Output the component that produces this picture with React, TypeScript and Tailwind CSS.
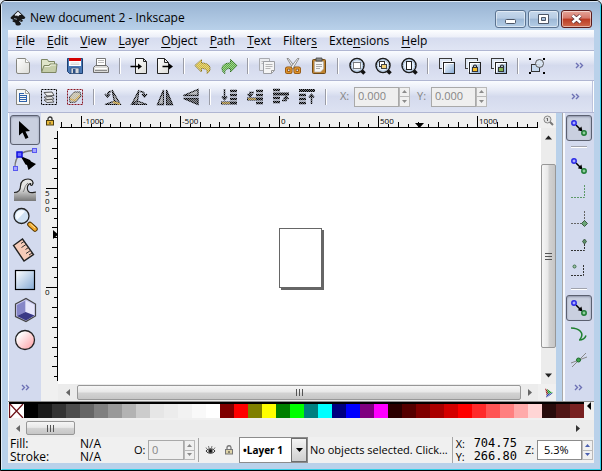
import { type ReactNode } from "react"
import { clsx } from "clsx"

const MENUS: [string, number][] = [
  ["File", 0],
  ["Edit", 0],
  ["View", 0],
  ["Layer", 0],
  ["Object", 0],
  ["Path", 0],
  ["Text", 0],
  ["Filters", 6],
  ["Extensions", 4],
  ["Help", 0],
]

const SWATCHES = [
  "#000000", "#1a1a1a", "#333333", "#4d4d4d", "#666666", "#808080", "#999999",
  "#b3b3b3", "#cccccc", "#e6e6e6", "#ececec", "#f2f2f2", "#f9f9f9", "#ffffff",
  "#800000", "#ff0000", "#808000", "#ffff00", "#008000", "#00ff00", "#008080",
  "#00ffff", "#000080", "#0000ff", "#800080", "#ff00ff", "#2b0000", "#550000",
  "#800000", "#aa0000", "#d40000", "#ff0000", "#ff2a2a", "#ff5555", "#ff8080",
  "#ffaaaa", "#ffd5d5", "#280b0b", "#501616", "#782121",
]

type Item = { label: string; icon: ReactNode; active?: boolean } | "sep"

/* Gradients and the stipple mask shared by all icons */
function IconDefs() {
  return (
    <svg className="absolute h-0 w-0" aria-hidden="true">
      <defs>
        <pattern id="checker" width="2" height="2" patternUnits="userSpaceOnUse">
          <rect width="2" height="2" fill="#777" />
          <rect width="1" height="1" fill="#fff" />
          <rect x="1" y="1" width="1" height="1" fill="#fff" />
        </pattern>
        <mask id="stipple" maskUnits="userSpaceOnUse" x="0" y="0" width="30" height="30">
          <rect width="30" height="30" fill="url(#checker)" />
        </mask>
        <linearGradient id="paper" x1="0" y1="0" x2="1" y2="1">
          <stop offset="0" stopColor="#fff" />
          <stop offset="1" stopColor="#dcdcd8" />
        </linearGradient>
        <linearGradient id="blue" x1="0" y1="0" x2="1" y2="1">
          <stop offset="0" stopColor="#fff" />
          <stop offset="1" stopColor="#84a9d4" />
        </linearGradient>
        <linearGradient id="pink" x1="0" y1="0" x2="1" y2="1">
          <stop offset="0.2" stopColor="#fff" />
          <stop offset="1" stopColor="#ff9a9f" />
        </linearGradient>
        <linearGradient id="water" x1="0" y1="0" x2="0" y2="1">
          <stop offset="0.4" stopColor="#e4e4e4" />
          <stop offset="1" stopColor="#777" />
        </linearGradient>
      </defs>
    </svg>
  )
}

function Icon({ children, faded }: { children: ReactNode; faded?: boolean }) {
  return (
    <svg width="20" height="20" viewBox="0 0 20 20" fill="none" className="shrink-0" aria-hidden="true">
      {faded ? <g mask="url(#stipple)">{children}</g> : children}
    </svg>
  )
}

function ToolIcon({ children }: { children: ReactNode }) {
  return (
    <svg width="26" height="26" viewBox="0 0 26 26" fill="none" className="shrink-0" aria-hidden="true">
      {children}
    </svg>
  )
}

function Lens({ children }: { children: ReactNode }) {
  return (
    <Icon>
      <path d="M14.5 14.5l3 3" stroke="#111" strokeWidth="3.5" />
      <circle cx="10" cy="9.5" r="7" fill="#e3eefa" stroke="#1c1c1c" strokeWidth="1.5" />
      <circle cx="10" cy="9.5" r="5.7" stroke="#a6bdd8" />
      {children}
    </Icon>
  )
}

function Layers({ children }: { children?: ReactNode }) {
  return (
    <Icon>
      <rect x="2.5" y="2.5" width="12" height="10" fill="#dfe8f4" stroke="#3a3a3a" />
      <rect x="5" y="5" width="11" height="11" fill="#f4f8fc" />
      <rect x="6.5" y="6.5" width="11" height="11" fill="url(#blue)" stroke="#222" />
      <path d="M7.5 16.5v-9h9" stroke="#fff" />
      {children}
    </Icon>
  )
}

function SnapNodes() {
  return (
    <Icon>
      <path d="M7 7l5 5" stroke="#000" strokeWidth="1.5" />
      <path d="M13.5 13.5L8.8 12.2l3.6-3.6z" fill="#000" />
      <circle cx="5" cy="5" r="2.2" fill="#a9a9ff" stroke="#2a2ae6" strokeWidth="1.5" />
      <circle cx="15" cy="15" r="2.2" fill="#8fcf9c" stroke="#1f7d35" strokeWidth="1.5" />
    </Icon>
  )
}

function Chevrons() {
  return (
    <svg width="9" height="7" viewBox="0 0 9 7" fill="none" stroke="#6d71b4" strokeWidth="1.4" aria-hidden="true">
      <path d="M1 1l2.5 2.5L1 6M5 1l2.5 2.5L5 6" />
    </svg>
  )
}

function Padlock({ open }: { open?: boolean }) {
  return (
    <svg width="10" height="10" viewBox="0 0 10 10" fill="none" aria-hidden="true">
      <path d={open ? "M3 4.5V3a2 2 0 0 1 4-.5V5" : "M3 5V3a2 2 0 0 1 4 0v2"} stroke={open ? "#777" : "#333"} strokeWidth="1.3" />
      <rect x="1.5" y="4.5" width="7" height="4.5" fill={open ? "#ddd3a8" : "#e8b93a"} stroke={open ? "#777" : "#4a3c10"} />
      <path d="M5 6v2" stroke="#333" />
    </svg>
  )
}

const COMMANDS: Item[] = [
  {
    label: "New",
    icon: (
      <Icon>
        <path d="M4.5 2.5h8l4 4V16a1.5 1.5 0 0 1-1.5 1.5H5A1.5 1.5 0 0 1 3.5 16V3.5a1 1 0 0 1 1-1z" fill="url(#paper)" stroke="#85857f" />
        <path d="M12.5 2.5v4h4" fill="#fff" stroke="#a5a59f" />
      </Icon>
    ),
  },
  {
    label: "Open",
    icon: (
      <Icon>
        <path d="M2.5 15.5v-12h6l1 2h6v5" fill="#dfe5c9" stroke="#7d8663" />
        <path d="M2.5 16.5L5 9.5h5L11 8h7l-1 8.5z" fill="#c5cda9" stroke="#7d8663" />
        <path d="M5.8 10.5h5l1-1.5h5" stroke="#eef1e0" />
      </Icon>
    ),
  },
  {
    label: "Save",
    icon: (
      <Icon>
        <path d="M2.5 2.5h15v15h-13l-2-2z" fill="#4a78b5" stroke="#1d3f70" />
        <path d="M4 2h12v8H4z" fill="#fff" />
        <path d="M4 2h12v3H4z" fill="#d40000" />
        <path d="M5.5 7h9M5.5 8.5h9" stroke="#ccc" strokeWidth="0.8" />
        <path d="M6 12h8v5.5H6z" fill="#d6d9dd" stroke="#33527d" strokeWidth="0.8" />
        <path d="M8 13h2.5v4H8z" fill="#2d4f83" />
      </Icon>
    ),
  },
  {
    label: "Print",
    icon: (
      <Icon>
        <path d="M5.5 9.5v-7h9v7" fill="#fff" stroke="#777" />
        <path d="M7 4.5h6M7 6.5h6" stroke="#bbb" />
        <path d="M2.5 16.5v-5l2-2h11l2 2v5z" fill="#dcdcda" stroke="#6c6c6c" />
        <path d="M4 12.5h12" stroke="#fff" />
        <path d="M4 14.5h12" stroke="#8c8c8c" />
      </Icon>
    ),
  },
  "sep",
  {
    label: "Import",
    icon: (
      <Icon>
        <path d="M6.5 2.5h8l3 3v12h-11z" fill="url(#paper)" stroke="#222" />
        <path d="M14.5 2.5v3h3" stroke="#222" />
        <path d="M1.5 10.5h9" stroke="#000" strokeWidth="1.5" />
        <path d="M9 7.5l4 3-4 3z" fill="#000" />
      </Icon>
    ),
  },
  {
    label: "Export",
    icon: (
      <Icon>
        <path d="M2.5 2.5h7l4 4v11h-11z" fill="url(#paper)" stroke="#222" />
        <path d="M9.5 2.5v4h4" stroke="#222" />
        <path d="M7.5 10.5h8" stroke="#000" strokeWidth="1.5" />
        <path d="M14 7.5l4 3-4 3z" fill="#000" />
      </Icon>
    ),
  },
  "sep",
  {
    label: "Undo",
    icon: (
      <Icon faded>
        <path d="M2 9.5L8.5 3.5V7c5 0 8.5 2 8.5 5.5 0 2-1 4-3 5 .8-3-.5-5-5.5-5V16z" fill="#dcbf2e" stroke="#8c7410" />
      </Icon>
    ),
  },
  {
    label: "Redo",
    icon: (
      <Icon faded>
        <path d="M18 9.5L11.5 3.5V7C6.5 7 3 9 3 12.5c0 2 1 4 3 5-.8-3 .5-5 5.5-5V16z" fill="#5fb53a" stroke="#2c7018" />
      </Icon>
    ),
  },
  "sep",
  {
    label: "Copy",
    icon: (
      <Icon>
        <path d="M2.5 2.5h10v12h-10z" fill="#ebecef" stroke="#a9abb0" />
        <path d="M4.5 5.5h5M4.5 7.5h3" stroke="#bbb" />
        <path d="M6.5 5.5h11v9l-3 3h-8z" fill="#f5f5f5" stroke="#9c9ea3" />
        <path d="M8.5 8.5h7M8.5 10.5h7M8.5 12.5h5" stroke="#b5b5b5" />
        <path d="M14.5 17.5v-3h3" stroke="#999" />
      </Icon>
    ),
  },
  {
    label: "Cut",
    icon: (
      <Icon>
        <path d="M4 2.5h1.5l7 9-2 1.5z" fill="#e8e8e6" stroke="#777" strokeWidth="0.8" />
        <path d="M16 2.5h-1.5l-7 9 2 1.5z" fill="#f5f5f3" stroke="#777" strokeWidth="0.8" />
        <rect x="3.5" y="12" width="4.5" height="4.5" rx="1" stroke="#8c500c" strokeWidth="3" />
        <rect x="12" y="12" width="4.5" height="4.5" rx="1" stroke="#8c500c" strokeWidth="3" />
        <rect x="3.5" y="12" width="4.5" height="4.5" rx="1" stroke="#e0952e" strokeWidth="1.5" />
        <rect x="12" y="12" width="4.5" height="4.5" rx="1" stroke="#e0952e" strokeWidth="1.5" />
      </Icon>
    ),
  },
  {
    label: "Paste",
    icon: (
      <Icon>
        <rect x="3.5" y="3.5" width="13" height="14" rx="1" fill="#c08430" stroke="#6f4a16" />
        <path d="M5.5 5.5h9V13l-3 3h-6z" fill="#f6f6f4" stroke="#aaa" strokeWidth="0.6" />
        <path d="M7 8.5h6M7 10.5h6M7 12.5h4" stroke="#aaa" />
        <path d="M7 2h6v3H7z" fill="#8a8a86" stroke="#444" strokeWidth="0.8" />
      </Icon>
    ),
  },
  "sep",
  {
    label: "Zoom selection",
    icon: (
      <Lens>
        <rect x="6.5" y="6.5" width="7" height="6" stroke="#000" strokeDasharray="1 1" fill="#fff" />
      </Lens>
    ),
  },
  {
    label: "Zoom drawing",
    icon: (
      <Lens>
        <rect x="6.5" y="5.5" width="5" height="5" fill="#fff" stroke="#333" />
        <rect x="8.5" y="8.5" width="5" height="4" fill="#f3d377" stroke="#444" />
      </Lens>
    ),
  },
  {
    label: "Zoom page",
    icon: (
      <Lens>
        <rect x="7.5" y="5.5" width="5" height="8" fill="#fff" stroke="#222" />
      </Lens>
    ),
  },
  "sep",
  { label: "Duplicate", icon: <Layers /> },
  {
    label: "Clone",
    icon: (
      <Layers>
        <path d="M10.5 12v-1.5a1.5 1.5 0 0 1 3 0V12" stroke="#222" strokeWidth="1.2" />
        <rect x="9.5" y="11.5" width="5" height="4" fill="#f5bd2a" stroke="#333" />
      </Layers>
    ),
  },
  {
    label: "Unlink clone",
    icon: (
      <Layers>
        <path d="M11.5 11v-.5a1.5 1.5 0 0 1 3 0V12" stroke="#222" strokeWidth="1.2" />
        <rect x="9.5" y="11.5" width="5" height="4" fill="#86b552" stroke="#333" />
      </Layers>
    ),
  },
  "sep",
  {
    label: "Group",
    icon: (
      <Icon>
        <rect x="4.5" y="8.5" width="8" height="7" fill="#c6d9ee" stroke="#333" />
        <circle cx="12.5" cy="7.5" r="4" fill="#d8e4f2" fillOpacity="0.9" stroke="#555" />
        <path d="M2 2h2v2H2zM16 2h2v2h-2zM2 16h2v2H2zM16 16h2v2h-2z" fill="#000" />
      </Icon>
    ),
  },
]

const SELECT_OPTIONS: Item[] = [
  {
    label: "Select all",
    icon: (
      <Icon>
        <path d="M3.5 2.5h9l4 4v11h-13z" fill="#f7f7f5" stroke="#85857f" />
        <path d="M12.5 2.5v4h4" stroke="#a5a59f" />
        <path d="M6 6.5h5M6 8.5h8M6 10.5h8M6 12.5h8M6 14.5h8M6.5 6v9M13.5 8v7" stroke="#2f62ab" />
      </Icon>
    ),
  },
  {
    label: "Select all in all layers",
    icon: (
      <Icon>
        <rect x="2.5" y="2.5" width="15" height="15" stroke="#000" strokeDasharray="2 1" />
        <path d="M5 13l3 2.5 7-.5-2-2.5z" fill="#eee" stroke="#555" />
        <path d="M5 10l3 2.5 7-.5-2-2.5z" fill="#eee" stroke="#555" />
        <path d="M5 5.5L8 9l7-.5L13 5z" fill="#eee" stroke="#555" />
      </Icon>
    ),
  },
  {
    label: "Deselect",
    icon: (
      <Icon>
        <rect x="2.5" y="2.5" width="15" height="15" stroke="#8b1420" strokeDasharray="2 1" />
        <g mask="url(#stipple)">
          <path d="M4.5 10L9 5h6l1 4-5 6-6 .5z" fill="#c9c0a0" stroke="#333" />
          <path d="M5 12l5 1.5 5-5" stroke="#d3a53c" strokeWidth="1.5" />
        </g>
      </Icon>
    ),
  },
  "sep",
  {
    label: "Rotate 90° CCW",
    icon: (
      <Icon faded>
        <path d="M9 3l3 14h5zM2 17.5h15L12 14z" fill="#aaa" stroke="#000" strokeWidth="1.2" />
        <path d="M10 15l7 2" stroke="#c99d31" strokeWidth="2" />
        <path d="M8 4.5C5 4.5 4.5 6 4.5 9M2 7l2.5 3L7 7" stroke="#000" strokeWidth="1.4" />
      </Icon>
    ),
  },
  {
    label: "Rotate 90° CW",
    icon: (
      <Icon faded>
        <path d="M10 3L8 17H3zM3 17.5h15L8 14z" fill="#aaa" stroke="#000" strokeWidth="1.2" />
        <path d="M11 4.5c4 0 4.5 1.5 4.5 4.5M13 7l2.5 3L18 7" stroke="#000" strokeWidth="1.4" />
      </Icon>
    ),
  },
  {
    label: "Flip horizontal",
    icon: (
      <Icon faded>
        <path d="M8.5 3v14.5h-6z" fill="#aaa" stroke="#000" strokeWidth="1.3" />
        <path d="M11.5 3v14.5h6z" fill="#444" stroke="#000" strokeWidth="1.3" />
      </Icon>
    ),
  },
  {
    label: "Flip vertical",
    icon: (
      <Icon faded>
        <path d="M2.5 8.5H17v-6z" fill="#aaa" stroke="#000" strokeWidth="1.3" />
        <path d="M2.5 11.5H17v6z" fill="#444" stroke="#000" strokeWidth="1.3" />
      </Icon>
    ),
  },
  "sep",
  {
    label: "Lower to bottom",
    icon: (
      <Icon faded>
        <path d="M11 4h7M11 8h7M11 12h7" stroke="#000" strokeWidth="2.5" />
        <path d="M2 16h16" stroke="#000" strokeWidth="3" />
        <path d="M3 16h8" stroke="#c99d31" strokeWidth="1.5" />
        <path d="M5.5 2v10M3 9.5l2.5 3 2.5-3" stroke="#000" strokeWidth="1.5" />
      </Icon>
    ),
  },
  {
    label: "Lower",
    icon: (
      <Icon faded>
        <path d="M11 4h7M11 8h7M11 16h7" stroke="#000" strokeWidth="2.5" />
        <path d="M2 12h16" stroke="#000" strokeWidth="3" />
        <path d="M3 12h8" stroke="#c99d31" strokeWidth="1.5" />
        <path d="M9 5.5H5V9M2.5 7L5 9.5 7.5 7" stroke="#000" strokeWidth="1.5" />
      </Icon>
    ),
  },
  {
    label: "Raise",
    icon: (
      <Icon faded>
        <path d="M2 3h7M2 11h7M2 15h7" stroke="#000" strokeWidth="2.5" />
        <path d="M2 7h16" stroke="#000" strokeWidth="3" />
        <path d="M11 13.5h4V10M12.5 12L15 9.5l2.5 2.5" stroke="#000" strokeWidth="1.5" />
      </Icon>
    ),
  },
  {
    label: "Raise to top",
    icon: (
      <Icon faded>
        <path d="M2 3.5h16" stroke="#000" strokeWidth="3" />
        <path d="M2 8h7M2 12h7M2 16h7" stroke="#000" strokeWidth="2.5" />
        <path d="M14.5 17V8M12 10.5l2.5-3 2.5 3" stroke="#000" strokeWidth="1.5" />
      </Icon>
    ),
  },
  "sep",
]

const TOOLS: { label: string; icon: ReactNode; active?: boolean }[] = [
  {
    label: "Select",
    active: true,
    icon: (
      <ToolIcon>
        <path d="M7 4v14.5l3.5-3 3 6.5 3-1.5-3-6 4.500-.5z" fill="#000" />
      </ToolIcon>
    ),
  },
  {
    label: "Edit paths by nodes",
    icon: (
      <ToolIcon>
        <path d="M3 20C3 9 9 4 21 3.5" stroke="#777" strokeWidth="1.3" />
        <rect x="1.5" y="19.5" width="4" height="4" fill="#a5a5ff" stroke="#5858f0" />
        <rect x="20.5" y="1.5" width="4" height="4" fill="#a5a5ff" stroke="#5858f0" />
        <path d="M8.5 9l5 8.5 1.5.5 1.5 5 7.500-6-5-2.5-1-1.5z" fill="#000" />
        <rect x="5" y="5" width="5" height="5" fill="#6a6aff" stroke="#1010e0" strokeWidth="1.5" />
      </ToolIcon>
    ),
  },
  {
    label: "Tweak",
    icon: (
      <ToolIcon>
        <path d="M2 15.5c5 0 6.5-3 6.5-6.5C8.5 4.5 12 2 16 2c4 0 6 3 4.5 5.5-.8 1.5-2.5.8-2-.8-4 0-5 9 1.5 9 1.5 0 2.5-.7 4-.7v9H2z" fill="url(#water)" />
        <path d="M2 15.5c5 0 6.5-3 6.5-6.5C8.5 4.5 12 2 16 2c4 0 6 3 4.5 5.5-.8 1.5-2.5.8-2-.8-4 0-5 9 1.5 9 1.5 0 2.5-.7 4-.7" stroke="#222" strokeWidth="1.2" />
        <path d="M11 15c2-2 1-6 5-9" stroke="#777" />
      </ToolIcon>
    ),
  },
  {
    label: "Zoom",
    icon: (
      <ToolIcon>
        <path d="M16 16l2 2" stroke="#333" strokeWidth="3" />
        <path d="M18 17.5l5 4.5" stroke="#5a3b05" strokeWidth="5.5" strokeLinecap="round" />
        <path d="M18 17.5l5 4.5" stroke="#f4ac2d" strokeWidth="3.5" strokeLinecap="round" />
        <path d="M18.5 17l4.5 4" stroke="#ffe4a1" />
        <circle cx="9.5" cy="9" r="7.5" fill="#cfe1f3" stroke="#222" strokeWidth="1.3" />
        <path d="M4 9a5.5 5.5 0 0 1 9-4.5L5 13A6 6 0 0 1 4 9z" fill="#f5faff" />
      </ToolIcon>
    ),
  },
  {
    label: "Measure",
    icon: (
      <ToolIcon>
        <path d="M1.5 8.5L10.5 2l11 15.5L12 24z" fill="#f6cbb8" stroke="#222" strokeWidth="1.4" />
        <path d="M12 4.5l-3 2M14 7.5l-4.5 3M16.5 10.5l-3 2M18.5 13.5l-4.5 3M20 16l-3 2" stroke="#333" />
      </ToolIcon>
    ),
  },
  {
    label: "Rectangle",
    icon: (
      <ToolIcon>
        <rect x="3.5" y="3.5" width="19" height="19" fill="url(#blue)" stroke="#000" strokeWidth="1.2" />
      </ToolIcon>
    ),
  },
  {
    label: "3D box",
    icon: (
      <ToolIcon>
        <path d="M3.5 7L14 1.5 23.5 7v12L14 24.5 3.5 19.5z" fill="#c6c6ee" />
        <path d="M5 8l8.5-4.5V15L5 19z" fill="#8686c8" />
        <path d="M13.5 3.5L22.5 8v10.5L13.5 15z" fill="#e6e6fb" />
        <path d="M5 19l8.5-4 9 3.5-8.5 5z" fill="#393985" />
        <path d="M3.5 7L14 1.5 23.5 7v12L14 24.5 3.5 19.5z" stroke="#444" strokeWidth="1.2" />
      </ToolIcon>
    ),
  },
  {
    label: "Ellipse",
    icon: (
      <ToolIcon>
        <circle cx="13" cy="13" r="9.5" fill="url(#pink)" stroke="#222" strokeWidth="1.3" />
      </ToolIcon>
    ),
  },
]

const SNAPS: Item[] = [
  { label: "Enable snapping", icon: <SnapNodes />, active: true },
  "sep",
  { label: "Snap bounding boxes", icon: <SnapNodes /> },
  {
    label: "Snap to edges",
    icon: (
      <Icon>
        <path d="M2 15.5h13.5V2" stroke="#5d9a68" strokeDasharray="2 1" />
      </Icon>
    ),
  },
  {
    label: "Snap to corners",
    icon: (
      <Icon>
        <path d="M2 15.5h13.5V2" stroke="#666" strokeDasharray="2 1" />
        <path d="M15.5 12.5l3 3-3 3-3-3z" fill="#6aa577" stroke="#3d5c45" />
      </Icon>
    ),
  },
  {
    label: "Snap to edge midpoints",
    icon: (
      <Icon>
        <path d="M2 16.5h13.5V6" stroke="#333" strokeDasharray="2 1" />
        <path d="M15.5 5l2 2.5-2 2.5-2-2.5z" fill="#5d8f69" stroke="#3d5c45" />
      </Icon>
    ),
  },
  {
    label: "Snap to centers",
    icon: (
      <Icon>
        <path d="M2 15.5h12.5V4" stroke="#333" strokeDasharray="2 1" />
        <circle cx="5.5" cy="6.5" r="1.5" fill="#9fc5a8" stroke="#3f6f4b" />
      </Icon>
    ),
  },
  "sep",
  { label: "Snap nodes", icon: <SnapNodes />, active: true },
  {
    label: "Snap to paths",
    icon: (
      <Icon>
        <path d="M2 4c8 0 14 5 9 11.5M10 16c4 0 6-1.5 7-4.5" stroke="#1f8030" strokeWidth="1.5" />
      </Icon>
    ),
  },
  {
    label: "Snap to intersections",
    icon: (
      <Icon>
        <path d="M2 13l16-6M3 17L17 3" stroke="#888" />
        <circle cx="9.5" cy="10" r="2" fill="#3fa54f" stroke="#1d6a2c" />
      </Icon>
    ),
  },
]

function ItemRow({ items }: { items: Item[] }) {
  return (
    <>
      {items.map((item, i) =>
        item === "sep" ? (
          <span key={i} className="flex w-3 shrink-0 justify-center">
            <span className="h-4 w-0.5 border-l border-[#9a9ca6] bg-white" />
          </span>
        ) : (
          <button key={i} aria-label={item.label} className="flex h-[26px] w-[26px] shrink-0 items-center justify-center">
            {item.icon}
          </button>
        )
      )}
    </>
  )
}

function Spinner({ name, color = "#8b8b8b" }: { name: string; color?: string }) {
  return (
    <span className="flex w-[11px] flex-col bg-[#f0f0f0]">
      <button aria-label={`Increase ${name}`} className="flex flex-1 items-center justify-center border border-[#b9b9b9]">
        <svg width="5" height="3" viewBox="0 0 5 3" aria-hidden="true"><path d="M0 3L2.5 0 5 3z" fill={color} /></svg>
      </button>
      <button aria-label={`Decrease ${name}`} className="flex flex-1 items-center justify-center border border-t-0 border-[#b9b9b9]">
        <svg width="5" height="3" viewBox="0 0 5 3" aria-hidden="true"><path d="M0 0l2.5 3L5 0z" fill={color} /></svg>
      </button>
    </span>
  )
}

function CoordField({ id, label }: { id: string; label: string }) {
  return (
    <div className="flex items-center gap-[3px] text-[#858585]">
      <label htmlFor={id} className="w-[11px]">{label}</label>
      <div className="flex h-5">
        <input id={id} defaultValue="0.000" disabled className="w-[45px] border border-[#a9a9a9] bg-[#efefef] px-[3px]" />
        <Spinner name={id} />
      </div>
    </div>
  )
}

function Arrow({ d, color = "#666" }: { d: string; color?: string }) {
  return (
    <svg width="9" height="9" viewBox="0 0 9 9" className="shrink-0" aria-hidden="true">
      <path d={d} fill={color} />
    </svg>
  )
}

function Grip({ vertical }: { vertical?: boolean }) {
  return (
    <svg width="9" height="9" viewBox="0 0 9 9" stroke="#555" aria-hidden="true">
      <path d={vertical ? "M1 1.5h7M1 4.5h7M1 7.5h7" : "M1.5 1v7M4.5 1v7M7.5 1v7"} />
    </svg>
  )
}

function WindowButton({ label, children, close }: { label: string; children: ReactNode; close?: boolean }) {
  return (
    <button
      aria-label={label}
      className={clsx(
        "flex h-[18px] w-[31px] items-center justify-center rounded-[3px] border shadow-[inset_0_0_0_1px_rgba(255,255,255,0.5)]",
        close
          ? "border-[#5b1b1b] bg-[linear-gradient(#e5a599_0%,#d6786a_45%,#bb3a22_50%,#cf6a4d_100%)]"
          : "border-[#5b7391] bg-[linear-gradient(#c6d8ec_0%,#b7cce4_45%,#9db8d6_50%,#b4cde6_100%)]"
      )}
    >
      {children}
    </button>
  )
}

function TitleBar() {
  return (
    <header className="flex h-7 shrink-0 justify-between bg-[linear-gradient(#99b4d3,#b9d1ea)]">
      <div className="flex items-start gap-1 pt-2 pl-2">
        <svg width="16" height="16" viewBox="0 0 16 16" aria-hidden="true">
          <path d="M8 .5l7 6.5c1 1-.5 2-3 2.3-1.5.2 1.5 1 1 1.7-.8 1-3.500.8-3 1.7.3.7 1.5.5 1 1.3-.6 1-1.6 1.5-3 1.5s-2-.5-2.5-1.300c-.5-.7.5-1.2-.5-1.7s-2-.5-2.5-1.2 2-1.3.5-1.6C.8 9 0 8 1 7z" fill="#171717" />
          <path d="M8 1.5L4.5 5 6 6l1-.8 1 1.2 1.5-1.3L11.5 5z" fill="#e8eef5" />
          <path d="M4 8.5l3 .8M9 11.5l2-.5" stroke="#8a97a8" />
        </svg>
        <h1 className="leading-4 text-black">New document 2 - Inkscape</h1>
      </div>
      <div className="flex gap-0.5 pt-2 pr-2">
        <WindowButton label="Minimize">
          <svg width="13" height="12" viewBox="0 0 13 12"><rect x="1.5" y="6.5" width="10" height="4" rx="1" fill="#fff" stroke="#4c5667" /></svg>
        </WindowButton>
        <WindowButton label="Maximize">
          <svg width="13" height="12" viewBox="0 0 13 12">
            <path d="M1.5 1.5h10v9h-10zM4.5 4.5h4v3h-4z" fill="#fff" fillRule="evenodd" stroke="#4c5667" />
          </svg>
        </WindowButton>
        <WindowButton label="Close" close>
          <svg width="13" height="12" viewBox="0 0 13 12" fill="none">
            <path d="M2.5 2.5l8 7M10.5 2.5l-8 7" stroke="#5a3038" strokeWidth="4" />
            <path d="M2.5 2.5l8 7M10.5 2.5l-8 7" stroke="#fff" strokeWidth="2.5" />
          </svg>
        </WindowButton>
      </div>
    </header>
  )
}

const BAR = "flex shrink-0 items-center border-b border-[#b0b6d2] bg-[linear-gradient(#fafcff_0%,#e6eaf6_30%,#d4daed_50%,#dde2f2_100%)]"

/* One tick each 50 units, numbered every 500 */
const TICKS = Array.from({ length: 121 }, (_, i) => i - 60)
const STEP = 9.92
const X_LABELS = [-1000, -500, 0, 500, 1000]
const Y_LABELS = [500, 0]

function RulerX() {
  return (
    <div className="ml-0.5 mr-[3px] overflow-hidden border-b border-black">
      <svg width="100%" height="14" className="block" aria-hidden="true">
        {TICKS.map((k) => {
          const x = Math.round(219 + k * STEP)
          const h = k % 10 === 0 ? 11 : k % 2 === 0 ? 5 : 3
          return <rect key={k} x={x} y={14 - h} width="1" height={h} />
        })}
        {X_LABELS.map((n) => (
          <text key={n} x={Math.round(221 + (n / 50) * STEP)} y="11" fontSize="8">{n}</text>
        ))}
        <path d="M355 10h9l-4.5 5z" />
      </svg>
    </div>
  )
}

function RulerY() {
  return (
    <div className="mt-[3px] mb-[3px] overflow-hidden border-r border-black">
      <svg width="16" height="100%" className="block" aria-hidden="true">
        {TICKS.map((k) => {
          const y = Math.round(156 + k * STEP)
          const w = k % 10 === 0 ? 11 : k % 2 === 0 ? 5 : 3
          return <rect key={k} x={16 - w} y={y} width={w} height="1" />
        })}
        {Y_LABELS.map((n) =>
          String(n).split("").map((digit, i) => (
            <text key={`${n}-${i}`} x="4" y={Math.round(156 - (n / 50) * STEP) + 8 + i * 8} fontSize="8">{digit}</text>
          ))
        )}
        <path d="M12 99v9l5-4.5z" />
      </svg>
    </div>
  )
}

const THUMB_X = "flex items-center justify-center rounded-[2px] border border-[#979797] bg-[linear-gradient(#f6f6f6_0%,#e8e8e8_45%,#d2d2d2_55%,#c6c6c6_100%)]"

function Workspace() {
  return (
    <div className="grid min-w-0 flex-1 grid-cols-[17px_1fr_15px] grid-rows-[15px_1fr_17px] bg-[#f0f0f0]">
      <div className="flex items-center justify-center"><Padlock /></div>
      <RulerX />
      <button aria-label="Zoom drawing if window is resized" className="flex items-center justify-center">
        <svg width="11" height="11" viewBox="0 0 11 11" fill="none" stroke="#888" aria-hidden="true">
          <circle cx="4.5" cy="4.5" r="3.5" fill="#e4e4e4" />
          <path d="M4.5 3v3M3.5 3.5h1" stroke="#666" />
          <path d="M7 7l3 3" stroke="#777" strokeWidth="2" />
        </svg>
      </button>

      <RulerY />
      <main className="relative overflow-hidden bg-white">
        <div className="absolute left-[221px] top-[100px] h-[60px] w-[43px] border border-[#666] bg-white shadow-[2px_2px_0_#666]" />
      </main>
      <div className="flex flex-col items-center bg-[#ececec]">
        <span className="flex h-9 shrink-0 items-center pb-[18px]"><Arrow d="M1 6.5L4.5 2.5 8 6.5z" color="#222" /></span>
        <div className="flex w-full flex-1 items-center justify-center rounded-[2px] border border-[#979797] bg-[linear-gradient(90deg,#f6f6f6_0%,#e8e8e8_45%,#d2d2d2_55%,#c6c6c6_100%)]">
          <Grip vertical />
        </div>
        <span className="flex h-9 shrink-0 items-center pt-[18px]"><Arrow d="M1 2.5h7L4.5 6.5z" color="#222" /></span>
      </div>

      <div />
      <div className="mr-[3px] flex items-center bg-[#ececec] pl-px">
        <span className="flex w-[18px] justify-center"><Arrow d="M6 1v7L2 4.5z" /></span>
        <div className={clsx(THUMB_X, "h-[15px] flex-1")}><Grip /></div>
        <span className="flex w-[17px] justify-center"><Arrow d="M3 1v7l4-3.5z" /></span>
      </div>
      <button aria-label="Color-managed view" className="flex items-center justify-center">
        <svg width="10" height="10" viewBox="0 0 10 10" aria-hidden="true">
          <g mask="url(#stipple)">
            <path d="M1 0l4 3-2 6z" fill="#a02020" />
            <path d="M3 1l6 4-5 1z" fill="#1d9a2c" />
            <path d="M9 5L2 10l1-4z" fill="#2a3fae" />
          </g>
        </svg>
      </button>
    </div>
  )
}

const PRESSED = "border border-[#5b6070] bg-[#c9cfdf] shadow-[inset_0_1px_2px_#8d94a8]"

function Toolbox() {
  return (
    <nav aria-label="Toolbox" className="flex w-[33px] shrink-0 flex-col items-center border-l border-white bg-[#d3daee] pt-0.5">
      {TOOLS.map((tool) => (
        <button
          key={tool.label}
          aria-label={tool.label}
          className={clsx("flex h-[30px] w-[30px] items-center justify-center rounded-[3px]", tool.active && PRESSED)}
        >
          {tool.icon}
        </button>
      ))}
      <button aria-label="More tools" className="mt-auto flex h-7 items-center"><Chevrons /></button>
    </nav>
  )
}

function SnapBar() {
  return (
    <nav aria-label="Snapping" className="ml-[6px] flex w-8 shrink-0 flex-col items-center border-l border-[#a9a9a9] bg-[#d3daee] pt-0.5 shadow-[inset_2px_0_0_#f7f9fd]">
      {SNAPS.map((snap, i) =>
        snap === "sep" ? (
          <span key={i} className="flex h-3 items-center">
            <span className="h-0.5 w-4 border-t border-[#a0a3ae] bg-white" />
          </span>
        ) : (
          <button
            key={i}
            aria-label={snap.label}
            className={clsx("flex h-[26px] w-[26px] items-center justify-center rounded-[3px]", snap.active && PRESSED)}
          >
            {snap.icon}
          </button>
        )
      )}
      <button aria-label="More snap options" className="mt-auto flex h-7 items-center"><Chevrons /></button>
    </nav>
  )
}

function Palette() {
  return (
    <div className="shrink-0 bg-[#f0f0f0]">
      <div className="flex h-[18px] items-start pl-px">
        <div className="flex h-4 flex-1 border-t-2 border-black">
          <button aria-label="None" className="w-[15px] shrink-0 bg-white">
            <svg width="15" height="14" viewBox="0 0 15 14" stroke="#6d1017" strokeWidth="1.3" aria-hidden="true">
              <path d="M.5 0v14M1 0l13 14M14 0L1 14" />
            </svg>
          </button>
          {SWATCHES.map((color, i) => (
            <button key={i} aria-label={color} className="flex-1" style={{ backgroundColor: color }} />
          ))}
        </div>
        <button aria-label="Palette menu" className="flex w-[10px] justify-center"><Arrow d="M6 0v8L2 4z" color="#000" /></button>
      </div>
      <div className="flex h-[17px] items-center bg-[#ececec] pl-0.5 pb-px">
        <span className="flex w-4 justify-center"><Arrow d="M6 1v7L2 4.5z" /></span>
        <div className={clsx(THUMB_X, "h-[14px] w-[49px]")}><Grip /></div>
        <span className="ml-auto mr-3"><Arrow d="M3 1v7l4-3.5z" color="#333" /></span>
      </div>
    </div>
  )
}

function StatusBar() {
  return (
    <footer className="flex h-[26px] shrink-0 items-center bg-[#f0f0f0] text-[11px] text-black">
      <dl className="grid w-[126px] shrink-0 grid-cols-[70px_1fr] pl-0.5 text-[12px] leading-[13px]">
        <dt>Fill:</dt>
        <dd>N/A</dd>
        <dt>Stroke:</dt>
        <dd>N/A</dd>
      </dl>
      <div className="flex shrink-0 items-center">
        <label htmlFor="opacity" className="w-[14px]">O:</label>
        <div className="flex h-5">
          <input id="opacity" defaultValue="0" disabled className="w-9 border border-[#a9a9a9] bg-[#efefef] px-[3px] text-[#858585]" />
          <Spinner name="opacity" />
        </div>
      </div>
      <span className="ml-[3px] h-6 w-px bg-[#a5a5a5]" />
      <button aria-label="Toggle layer visibility" className="ml-[3px] flex w-4 justify-center">
        <svg width="11" height="9" viewBox="0 0 11 9" fill="none" stroke="#333" aria-hidden="true">
          <path d="M1 5c2-3 7-3 9 0-2 3-7 3-9 0z" />
          <path d="M2 3L1 1.5M4 2L3.5 0M6.5 2L7 0M9 3l1-1.5" stroke="#777" />
          <circle cx="5.5" cy="5" r="1.7" fill="#111" />
        </svg>
      </button>
      <button aria-label="Toggle layer lock" className="ml-[3px] flex w-4 justify-center"><Padlock open /></button>
      <div className="relative ml-0.5 h-[26px] w-[69px] shrink-0 border border-[#8c8c8c] bg-white">
        <select aria-label="Current layer" className="h-full w-full appearance-none pl-[3px] text-[10px] font-bold">
          <option>•Layer 1</option>
        </select>
        <span className="pointer-events-none absolute inset-y-0 right-0 flex w-4 items-center justify-center border border-[#6e6e6e] bg-[linear-gradient(#f4f4f4,#cfcfcf)]">
          <svg width="7" height="4" viewBox="0 0 7 4" aria-hidden="true"><path d="M0 0h7L3.5 4z" /></svg>
        </span>
      </div>
      <p className="min-w-0 flex-1 pl-0.5 whitespace-nowrap">No objects selected. Click...</p>
      <dl className="grid shrink-0 grid-cols-[18px_auto] items-center border-l border-[#a5a5a5] pl-[3px] leading-[13px]">
        <dt>X:</dt>
        <dd className="font-['DejaVu_Sans_Mono',monospace] text-[12px] leading-[13px]">704.75</dd>
        <dt>Y:</dt>
        <dd className="font-['DejaVu_Sans_Mono',monospace] text-[12px] leading-[13px]">266.80</dd>
      </dl>
      <label htmlFor="zoom" className="ml-2 w-3">Z:</label>
      <div className="mr-px flex h-5 shrink-0">
        <input id="zoom" defaultValue="5.3%" className="w-[45px] border border-[#8c8c8c] bg-white px-1.5" />
        <Spinner name="zoom" color="#4a5fb0" />
      </div>
    </footer>
  )
}

export default function App() {
  return (
    <div className="h-screen bg-[#dfe7f0] font-['Open_Sans','Noto_Sans',sans-serif] text-[12px]">
      <IconDefs />
      <div className="flex h-full flex-col overflow-hidden rounded-t-md border border-black bg-[#b9d1ea]">
        <div className="flex min-h-0 flex-1 flex-col border border-t-[#dce8f5] border-r-[#35d0e8] border-b-[#35d0e8] border-l-[#e3edf7] pb-1.5">
          <TitleBar />
          <div className="mx-1.5 flex min-h-0 flex-1 flex-col">
            <nav aria-label="Menu" className="flex h-[21px] shrink-0 items-center gap-3 border-b border-[#b0b6d2] bg-[linear-gradient(#fdfeff_0%,#eceff8_35%,#d6dcef_40%,#e0e5f4_100%)] pt-0.5 pl-2 text-black">
              {MENUS.map(([name, key]) => (
                <button key={name}>
                  {name.slice(0, key)}
                  <span className="underline underline-offset-2">{name[key]}</span>
                  {name.slice(key + 1)}
                </button>
              ))}
            </nav>
            <div role="toolbar" aria-label="Commands" className={clsx(BAR, "h-[30px] pl-0.5")}>
              <ItemRow items={COMMANDS} />
              <button aria-label="More commands" className="ml-auto mr-2.5"><Chevrons /></button>
            </div>
            <div role="toolbar" aria-label="Tool options" className={clsx(BAR, "h-8 pl-0.5 text-[11px]")}>
              <ItemRow items={SELECT_OPTIONS} />
              <div className="ml-2 flex gap-[7px]">
                <CoordField id="x" label="X:" />
                <CoordField id="y" label="Y:" />
              </div>
              <button aria-label="More options" className="ml-auto mr-3"><Chevrons /></button>
              <span className="h-full w-0.5 border-l border-[#bcc3dc] bg-white" />
            </div>
            <div className="flex min-h-0 flex-1 border-b border-[#8e8e8e]">
              <Toolbox />
              <Workspace />
              <SnapBar />
            </div>
            <Palette />
            <StatusBar />
          </div>
        </div>
      </div>
    </div>
  )
}
